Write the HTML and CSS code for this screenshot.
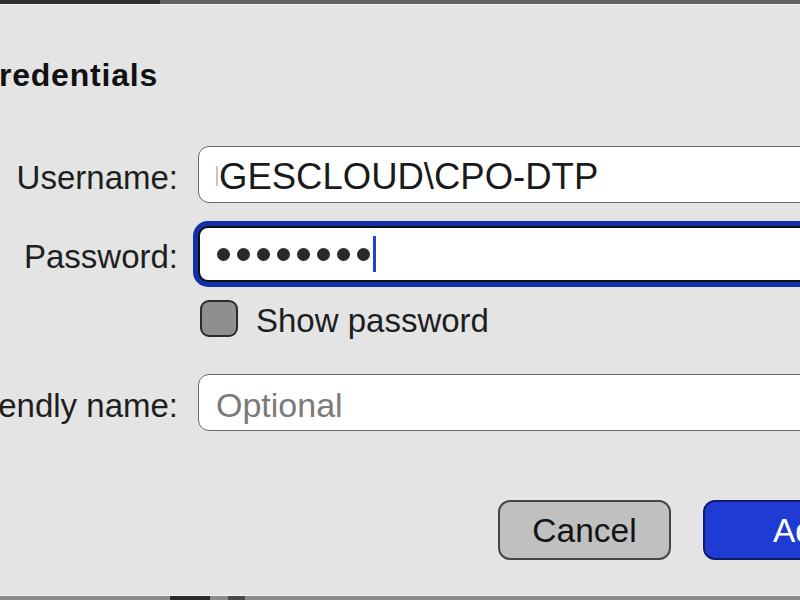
FILE: index.html
```html
<!DOCTYPE html>
<html lang="en">
<head>
<meta charset="utf-8">
<title>Credentials</title>
<link rel="stylesheet" href="styles.css">
</head>
<body>
<div class="topbar"><span class="tb-dark"></span><span class="tb-rest"></span></div>
<main class="dialog">
  <h1 class="title">Credentials</h1>
  <div class="form">
    <div class="row row-user">
      <label class="label"><span>Username:</span></label>
      <div class="field"><span class="caret-ghost"></span>GESCLOUD\CPO-DTP</div>
    </div>
    <div class="row row-pass">
      <label class="label"><span>Password:</span></label>
      <div class="field focused">
        <span class="dots"><i></i><i></i><i></i><i></i><i></i><i></i><i></i><i></i></span><span class="caret"></span>
      </div>
    </div>
    <div class="row row-check">
      <span></span>
      <div class="check-row"><span class="checkbox"></span><span class="check-label">Show password</span></div>
    </div>
    <div class="row row-friendly">
      <label class="label"><span>Friendly name:</span></label>
      <div class="field placeholder">Optional</div>
    </div>
  </div>
  <div class="buttons">
    <button class="btn cancel">Cancel</button>
    <button class="btn add">Add</button>
  </div>
</main>
<div class="bottombar"><span class="bb-a"></span><span class="bb-b"></span><span class="bb-c"></span><span class="bb-d"></span></div>
</body>
</html>
```

FILE: styles.css
```css
html, body {
  margin: 0;
  padding: 0;
}
body {
  width: 800px;
  height: 600px;
  overflow: hidden;
  background: #e4e4e4;
  font-family: "Liberation Sans", Arial, sans-serif;
  color: #1e1e1e;
  display: flex;
  flex-direction: column;
}
.topbar {
  display: flex;
  height: 4px;
  border-bottom: 1px solid #f4f4f4;
  flex: none;
}
.tb-dark { width: 160px; background: #2e2e2e; }
.tb-rest { flex: 1; background: #626262; }

.dialog {
  flex: 1;
  display: flex;
  flex-direction: column;
  overflow: hidden;
}
.title {
  margin: 52px 0 0 -25px;
  font-size: 32px;
  line-height: 36px;
  font-weight: bold;
  letter-spacing: 0.8px;
  color: #111;
  white-space: nowrap;
}
.form {
  margin-top: 53px;
  display: flex;
  flex-direction: column;
}
.row {
  display: grid;
  grid-template-columns: 178px 640px;
  column-gap: 20px;
  align-items: center;
}
.row-pass { margin-top: 23px; }
.row-check { margin-top: 18px; }
.row-friendly { margin-top: 37px; }

.label {
  font-size: 33px;
  display: flex;
  justify-content: flex-end;
  white-space: nowrap;
  overflow: hidden;
  color: #1e1e1e;
  padding-top: 6px;
}
.label span { flex: none; }
.field {
  box-sizing: border-box;
  height: 57px;
  border: 1.5px solid #6a6a6a;
  border-radius: 11px;
  background: #fff;
  font-size: 36.5px;
  padding-left: 20px;
  padding-top: 5px;
  display: flex;
  align-items: center;
  color: #1a1a1a;
  position: relative;
}
.caret-ghost {
  position: absolute;
  left: 17px;
  top: 19px;
  width: 2px;
  height: 20px;
  background: #c4c4c4;
}
.field.focused {
  height: 56px;
  border: 2px solid #111;
  border-radius: 10px;
  box-shadow: 0 0 0 5px #1430a6;
  padding-left: 17px;
  padding-top: 0;
}
.dots { display: flex; gap: 7px; }
.dots i {
  display: block;
  width: 13px;
  height: 13px;
  border-radius: 50%;
  background: #2a2a2a;
}
.caret {
  width: 3px;
  height: 36px;
  background: #2340d6;
  margin-left: 3px;
}
.field.placeholder {
  color: #7a7a7a;
  font-size: 34px;
  padding-left: 17px;
}
.check-row {
  display: flex;
  align-items: center;
  gap: 18px;
  height: 37px;
  padding-left: 2px;
}
.checkbox {
  box-sizing: border-box;
  width: 38px;
  height: 37px;
  border: 2px solid #2b2b2b;
  border-radius: 9px;
  background: #8f8f8f;
}
.check-label { font-size: 33px; padding-top: 4px; }

.buttons {
  margin-top: 69px;
  display: flex;
  gap: 32px;
  padding-left: 498px;
}
.btn {
  box-sizing: border-box;
  flex: none;
  height: 60px;
  border-radius: 12px;
  font-family: "Liberation Sans", Arial, sans-serif;
  font-size: 33.5px;
  padding: 2px 0 0;
}
.btn.cancel {
  width: 173px;
  background: #c0c0c0;
  border: 2px solid #454545;
  color: #141414;
}
.btn.add {
  width: 200px;
  background: #1e3cd3;
  border: 2px solid #101c6a;
  color: #fff;
  text-align: left;
  padding-left: 68px;
}

.bottombar {
  flex: none;
  height: 4px;
  border-top: 1px solid #f4f4f4;
  background: #8c8c8c;
  display: flex;
}
.bottombar span { display: block; }
.bb-a { width: 170px; }
.bb-b { width: 40px; background: #2c2c2c; }
.bb-c { width: 18px; }
.bb-d { width: 17px; background: #4a4a4a; }
```
